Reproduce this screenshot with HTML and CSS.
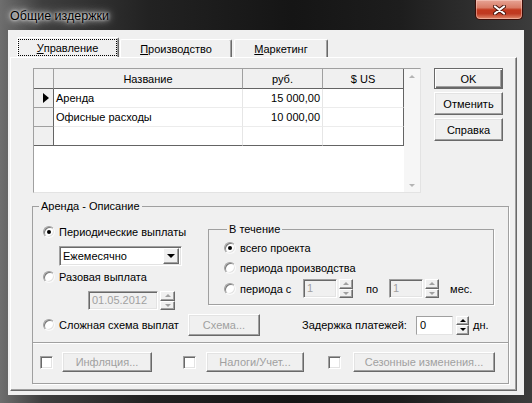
FILE: index.html
```html
<!DOCTYPE html>
<html lang="ru">
<head>
    <meta charset="UTF-8">
    <title>Общие издержки</title>
    <link rel="stylesheet" href="styles.css">
</head>
<body>
<div class="window">
    <div class="titlebar">
        <span class="title">Общие издержки</span>
        <div class="close">
            <svg width="13" height="10" viewBox="0 0 13 10">
                <path d="M2 1.5 L11 8.5 M11 1.5 L2 8.5" stroke="#4a150c" stroke-width="4" stroke-linecap="round"/>
                <path d="M2 1.5 L11 8.5 M11 1.5 L2 8.5" stroke="#fff" stroke-width="2.2" stroke-linecap="round"/>
            </svg>
        </div>
    </div>
    <div class="frame">
        <div class="client">
            <div class="tabs">
                <div class="tab active"><span class="focus"><u>У</u>правление</span></div>
                <div class="tab t2"><u>П</u>роизводство</div>
                <div class="tab t3"><u>М</u>аркетинг</div>
            </div>
            <div class="sheet">
                <div class="top">
                    <div class="grid">
                        <table class="rows">
                            <tr class="hdr">
                                <th class="ind"></th>
                                <th class="name">Название</th>
                                <th class="rub">руб.</th>
                                <th class="usd">$ US</th>
                            </tr>
                            <tr>
                                <td class="ind"><span class="cur"></span></td>
                                <td class="name">Аренда</td>
                                <td class="rub">15 000,00</td>
                                <td class="usd"></td>
                            </tr>
                            <tr>
                                <td class="ind"></td>
                                <td class="name">Офисные расходы</td>
                                <td class="rub">10 000,00</td>
                                <td class="usd"></td>
                            </tr>
                            <tr class="last">
                                <td class="ind"></td>
                                <td class="name"></td>
                                <td class="rub"></td>
                                <td class="usd"></td>
                            </tr>
                        </table>
                        <div class="vscroll"><i class="sc-up"></i><i class="sc-dn"></i></div>
                    </div>
                    <div class="cmds">
                        <button class="btn ok">OK</button>
                        <button class="btn">Отменить</button>
                        <button class="btn">Справка</button>
                    </div>
                </div>

                <fieldset class="desc">
                    <legend>Аренда - Описание</legend>
                    <div class="desc-main">
                        <div class="pay-col">
                            <label class="radio-row first"><span class="radio on"></span>Периодические выплаты</label>
                            <div class="combo"><span class="combo-text">Ежемесячно</span><span class="drop"><i class="drop-arrow"></i></span></div>
                            <label class="radio-row second"><span class="radio"></span>Разовая выплата</label>
                            <div class="date-row">
                                <div class="field off date">01.05.2012</div>
                                <div class="spin date-spin"><span class="spin-btn"><i class="up"></i></span><span class="spin-btn"><i class="dn"></i></span></div>
                            </div>
                        </div>
                        <fieldset class="period">
                            <legend>В течение</legend>
                            <label class="p-row r1"><span class="radio on"></span>всего проекта</label>
                            <label class="p-row r2"><span class="radio"></span>периода производства</label>
                            <div class="p-row r3">
                                <label class="from"><span class="radio"></span>периода с</label>
                                <div class="field off small">1</div>
                                <div class="spin"><span class="spin-btn"><i class="up"></i></span><span class="spin-btn"><i class="dn"></i></span></div>
                                <span class="to">по</span>
                                <div class="field off small">1</div>
                                <div class="spin"><span class="spin-btn"><i class="up"></i></span><span class="spin-btn"><i class="dn"></i></span></div>
                                <span class="mes">мес.</span>
                            </div>
                        </fieldset>
                    </div>
                    <div class="scheme-row">
                        <label class="scheme"><span class="radio"></span>Сложная схема выплат</label>
                        <button class="btn off scheme-btn">Схема...</button>
                        <span class="delay">Задержка платежей:</span>
                        <div class="field delay-field">0</div>
                        <div class="spin on delay-spin"><span class="spin-btn"><i class="up"></i></span><span class="spin-btn"><i class="dn"></i></span></div>
                        <span class="days">дн.</span>
                    </div>
                    <div class="extras">
                        <span class="check"></span>
                        <button class="btn off infl">Инфляция...</button>
                        <span class="check c2"></span>
                        <button class="btn off tax">Налоги/Учет...</button>
                        <span class="check c3"></span>
                        <button class="btn off season">Сезонные изменения...</button>
                    </div>
                </fieldset>
            </div>
        </div>
    </div>
</div>
</body>
</html>
```

FILE: styles.css
```css
* { box-sizing: border-box; }
body { margin:0; width:532px; height:403px; overflow:hidden; background:#1b1b1b; font-family:"Liberation Sans", Arial, sans-serif; font-size:11px; color:#000; }

/* window frame */
.window { width:532px; height:403px; background:linear-gradient(90deg, #6e6e6e 0%, #3e3e3e 8%, #222 28%, #151515 55%, #1d1d1d 75%, #3c3c3c 100%); }
.titlebar { height:30px; display:flex; align-items:flex-start; padding-left:10px; }
.title { margin-top:9px; font-size:12.5px; line-height:14px; color:#000; text-shadow:0 0 3px #fff, 0 0 6px rgba(255,255,255,.9), 0 0 11px rgba(255,255,255,.7); }
.close { margin-left:auto; margin-right:9px; width:48px; height:20px; display:flex; align-items:center; justify-content:center; border:1px solid #3a0d07; border-top:none; border-radius:0 0 5px 5px; background:linear-gradient(#e7a495 0%, #d97c66 40%, #c2391e 52%, #bf3a22 72%, #e08a6c 100%); box-shadow:inset 0 0 0 1px rgba(255,220,210,.45); }
.frame { padding:0 8px 8px 8px; }
.client { width:516px; height:365px; background:#f0f0f0; padding:7px 7px 4px 2px; }

/* tabs */
.tabs { display:flex; align-items:flex-end; height:20px; margin-left:7px; }
.tab { height:18px; display:flex; align-items:center; justify-content:center; border:1px solid; border-color:#fff #696969 transparent #fff; border-bottom:none; border-radius:2px 2px 0 0; box-shadow:inset -1px 0 #a0a0a0; }
.tab.active { width:102px; height:20px; padding:1px 1px 1px 0; }
.tab.active .focus { flex:1; align-self:stretch; display:flex; align-items:center; justify-content:center; border:1px dotted #000; }
.t2 { width:112px; margin-left:1px; }
.t3 { width:94px; margin-left:2px; }
.sheet { height:334px; border:1px solid; border-color:#fff #696969 #696969 #fff; box-shadow:inset -1px -1px #a0a0a0; padding:10px 0 0 21px; }

/* grid */
.top { display:flex; align-items:flex-start; }
.grid { display:flex; width:388px; height:125px; margin-left:1px; background:#fff; border:1px solid; border-color:#a0a0a0 #e3e3e3 #e3e3e3 #a0a0a0; }
.rows { width:370px; border-spacing:0; table-layout:fixed; align-self:flex-start; }
.rows th, .rows td { box-sizing:border-box; padding:0 2px; font-weight:normal; white-space:nowrap; border-right:1px solid #e6e6e6; border-bottom:1px solid #ececec; height:19px; line-height:18px; }
.rows .hdr th { height:20px; background:#f0f0f0; border-right-color:#a0a0a0; border-bottom-color:#646464; text-align:center; }
.rows .ind { width:20px; background:#f0f0f0; border-right-color:#646464; border-bottom-color:#a0a0a0; padding:0; }
.rows .name { width:189px; }
.rows .rub { width:80px; text-align:right; }
.rows .usd { width:81px; border-right-color:#646464; }
.rows .hdr .usd { border-right-color:#646464; }
.rows .hdr .ind { border-bottom-color:#646464; }
.rows .last td { border-bottom-color:#646464; }
.cur { display:block; width:0; height:0; margin-left:9px; border-left:6px solid #000; border-top:5px solid transparent; border-bottom:5px solid transparent; }
.vscroll { flex:1; background:#f6f6f6; display:flex; flex-direction:column; align-items:center; justify-content:space-between; padding:6px 0 5px; }
.sc-up, .sc-dn { width:0; height:0; border-left:3px solid transparent; border-right:3px solid transparent; }
.sc-up { border-bottom:3px solid #b4b4b4; }
.sc-dn { border-top:3px solid #b4b4b4; }

/* buttons */
.btn { display:flex; align-items:center; justify-content:center; padding:0; margin:0; font:inherit; color:#000; background:#f0f0f0; border:1px solid; border-color:#fff #696969 #696969 #fff; box-shadow:inset -1px -1px #a0a0a0, inset 1px 1px #e3e3e3; }
.btn.off { color:#a0a0a0; }
.cmds { display:flex; flex-direction:column; margin-left:13px; }
.cmds .btn { width:69px; height:23px; margin-bottom:3px; }
.cmds .ok { height:21px; margin-bottom:3px; border-color:#696969; box-shadow:inset 1px 1px #fff, inset -1px -1px #696969, inset -2px -2px #a0a0a0; }

/* fields */
.field { height:19px; line-height:15px; padding:1px 3px; background:#fff; border:1px solid; border-color:#a0a0a0 #fff #fff #a0a0a0; box-shadow:inset 1px 1px #696969, inset -1px -1px #e3e3e3; white-space:nowrap; }
.field.off { background:#f0f0f0; color:#a0a0a0; }
.spin { display:flex; flex-direction:column; width:14px; height:19px; margin-left:2px; }
.spin-btn { flex:1; display:flex; align-items:center; justify-content:center; background:#f0f0f0; border:1px solid; border-color:#fff #696969 #696969 #fff; box-shadow:inset -1px -1px #a0a0a0; }
.up, .dn { width:0; height:0; border-left:3px solid transparent; border-right:3px solid transparent; }
.up { border-bottom:3px solid #a0a0a0; }
.dn { border-top:3px solid #a0a0a0; }
.spin.on .up { border-bottom-color:#000; }
.spin.on .dn { border-top-color:#000; }

/* radio / check */
.radio { flex:none; width:12px; height:12px; margin-right:4px; border-radius:50%; background:#fff; border:1px solid; border-color:#a0a0a0 #fafafa #fafafa #a0a0a0; box-shadow:inset 1px 1px #7a7a7a, inset -1px -1px #e3e3e3; display:flex; align-items:center; justify-content:center; }
.radio.on::after { content:""; width:4px; height:4px; border-radius:50%; background:#000; }
.check { flex:none; width:13px; height:13px; background:#fff; border:1px solid; border-color:#a0a0a0 #fff #fff #a0a0a0; box-shadow:inset 1px 1px #696969, inset -1px -1px #e3e3e3; }

/* description group */
fieldset { margin:0; padding:0; min-width:0; border:1px solid #a0a0a0; }
legend { padding:0 2px; line-height:14px; }
.desc { width:477px; margin-top:6px; box-shadow:1px 1px 0 #fff; }
.desc > legend { margin-left:6px; }
.desc-main { display:flex; align-items:flex-start; padding:9px 0 0 10px; }
.pay-col { width:139px; display:flex; flex-direction:column; align-items:flex-start; }
.radio-row { display:flex; align-items:center; height:14px; white-space:nowrap; }
.radio-row.first { margin-top:3px; }
.radio-row.second { margin-top:4px; }
.combo { display:flex; align-items:center; width:123px; height:20px; margin:7px 0 0 16px; padding:2px; background:#fff; border:1px solid; border-color:#a0a0a0 #fff #fff #a0a0a0; box-shadow:inset 1px 1px #696969, inset -1px -1px #e3e3e3; }
.combo-text { flex:1; padding-left:1px; }
.drop { width:16px; height:16px; display:flex; align-items:center; justify-content:center; background:#f0f0f0; border:1px solid; border-color:#fff #696969 #696969 #fff; box-shadow:inset -1px -1px #a0a0a0; }
.drop-arrow { width:0; height:0; border-left:4px solid transparent; border-right:4px solid transparent; border-top:4px solid #000; }
.date-row { display:flex; margin:7px 0 0 45px; }
.date { width:70px; }
.date-spin { width:15px; }

.period { width:286px; margin-left:26px; padding:0 0 6px 15px; box-shadow:1px 1px 0 #fff; }
.period > legend { margin-left:3px; }
.p-row { display:flex; align-items:center; height:14px; white-space:nowrap; }
.p-row.r1 { margin-top:5px; }
.p-row.r2 { margin-top:6px; }
.p-row.r3 { height:19px; margin-top:4px; }
.from { display:flex; align-items:center; width:79px; }
.small { width:34px; }
.to { margin:0 11px 0 13px; }
.mes { margin-left:11px; }

.scheme-row { display:flex; align-items:center; height:22px; margin-top:4px; padding-left:10px; white-space:nowrap; }
.scheme { display:flex; align-items:center; width:145px; }
.scheme-btn { width:72px; height:22px; }
.delay { margin-left:42px; width:110px; }
.delay-field { width:37px; margin-left:4px; box-shadow:none; border-color:#a0a0a0 #e3e3e3 #e3e3e3 #a0a0a0; }
.delay-spin { width:13px; margin-left:3px; }
.days { margin-left:4px; }

.extras { display:flex; align-items:center; margin-top:6px; padding:9px 0 11px 7px; border-top:1px solid #a0a0a0; box-shadow:inset 0 1px #fff; }
.extras .btn { height:20px; }
.infl { width:90px; margin-left:9px; }
.c2 { margin-left:31px; }
.tax { width:98px; margin-left:10px; }
.c3 { margin-left:24px; }
.season { width:142px; margin-left:12px; }
```
